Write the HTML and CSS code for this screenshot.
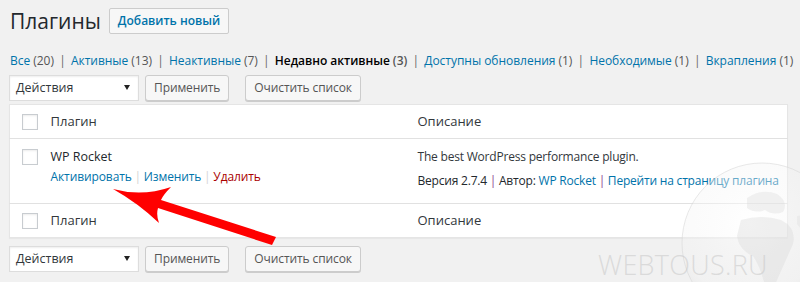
FILE: index.html
```html
<!DOCTYPE html>
<html lang="ru">
<head>
<meta charset="utf-8">
<title>Плагины</title>
<link rel="stylesheet" href="styles.css">
</head>
<body>
<div class="wrap">
  <div class="heading">
    <h1 class="title">Плагины</h1>
    <a class="add-new" href="#">Добавить новый</a>
  </div>

  <ul class="subsubsub">
    <li><a href="#">Все <span class="count">(20)</span></a><span class="sep">|</span></li>
    <li><a href="#">Активные <span class="count">(13)</span></a><span class="sep">|</span></li>
    <li><a href="#">Неактивные <span class="count">(7)</span></a><span class="sep">|</span></li>
    <li><a href="#" class="current">Недавно активные <span class="count">(3)</span></a><span class="sep">|</span></li>
    <li><a href="#">Доступны обновления <span class="count">(1)</span></a><span class="sep">|</span></li>
    <li><a href="#">Необходимые <span class="count">(1)</span></a><span class="sep">|</span></li>
    <li><a href="#">Вкрапления <span class="count">(1)</span></a></li>
  </ul>

  <div class="tablenav top">
    <div class="select">Действия<span class="caret"></span></div>
    <button class="button">Применить</button>
    <button class="button clear">Очистить список</button>
  </div>

  <table class="widefat">
    <colgroup>
      <col class="col-check">
      <col class="col-name">
      <col class="col-desc">
    </colgroup>
    <thead>
      <tr>
        <td class="check-column"><span class="cb"></span></td>
        <th class="head-cell">Плагин</th>
        <th class="head-cell">Описание</th>
      </tr>
    </thead>
    <tbody>
      <tr class="plugin-row">
        <td class="check-column row-check"><span class="cb"></span></td>
        <td class="plugin-title">
          <div class="name">WP Rocket</div>
          <div class="row-actions"><a href="#">Активировать</a><span class="bar">|</span><a href="#">Изменить</a><span class="bar">|</span><a href="#" class="delete">Удалить</a></div>
        </td>
        <td class="plugin-desc">
          <p class="desc-text">The best WordPress performance plugin.</p>
          <div class="meta">Версия 2.7.4<span class="pipe">|</span>Автор: <a href="#">WP Rocket</a><span class="pipe">|</span><a href="#">Перейти на страницу плагина</a></div>
        </td>
      </tr>
    </tbody>
    <tfoot>
      <tr>
        <td class="check-column"><span class="cb"></span></td>
        <th class="head-cell">Плагин</th>
        <th class="head-cell">Описание</th>
      </tr>
    </tfoot>
  </table>

  <div class="tablenav bottom">
    <div class="select">Действия<span class="caret"></span></div>
    <button class="button">Применить</button>
    <button class="button clear">Очистить список</button>
  </div>
</div>

<div class="watermark">
  <svg class="globe" width="170" height="170" viewBox="0 0 170 170">
    <defs>
      <radialGradient id="gl" cx="0.42" cy="0.38" r="0.65">
        <stop offset="0" stop-color="#ffffff" stop-opacity="0.55"/>
        <stop offset="0.7" stop-color="#f2f2f2" stop-opacity="0.35"/>
        <stop offset="1" stop-color="#c8c8c8" stop-opacity="0.4"/>
      </radialGradient>
    </defs>
    <circle cx="85" cy="85" r="80" fill="url(#gl)" stroke="#d6d6d6" stroke-opacity="0.55" stroke-width="1"/>
    <path d="M70,40 Q85,30 100,36 Q112,44 106,54 Q96,58 88,52 Q78,56 70,50 Z" fill="#d4d4d4" fill-opacity="0.3"/>
    <path d="M64,62 Q84,56 104,62 Q120,70 116,86 Q108,104 100,122 Q94,136 88,128 Q84,110 76,98 Q62,92 60,78 Z" fill="#d4d4d4" fill-opacity="0.32"/>
    <path d="M120,58 Q140,56 150,70 Q146,80 136,78 Q126,74 120,66 Z" fill="#d6d6d6" fill-opacity="0.28"/>
  </svg>
  <div class="wm-text">WEBTOUS.RU</div>
</div>

<svg class="arrow" width="800" height="282" viewBox="0 0 800 282">
  <path d="M113,189 Q142,197 171,187 Q163,195 161,200 L276,237 L272,245 L158,208 Q156,215 159,223 Q138,203 113,189 Z" fill="#ff0000"/>
</svg>
</body>
</html>
```

FILE: styles.css
```css
html, body {
  margin: 0;
  padding: 0;
  background: #f1f1f1;
}

body {
  font-family: "Open Sans", "Noto Sans", sans-serif;
  font-size: 12px;
  color: #444;
  position: relative;
  width: 800px;
  height: 282px;
  overflow: hidden;
}

a {
  color: #0073aa;
  text-decoration: none;
}

.wrap {
  margin: 0 13px 0 9px;
  padding-top: 8px;
  position: relative;
  z-index: 1;
}

.heading {
  display: flex;
  align-items: center;
  height: 26px;
}

.title {
  margin: 0;
  font-size: 21px;
  font-weight: 400;
  color: #23282d;
  line-height: 26px;
  padding-left: 1px;
}

.add-new {
  margin-left: 8px;
  height: 24px;
  line-height: 24px;
  padding: 0 8px;
  border: 1px solid #ccc;
  border-radius: 2px;
  background: #f7f7f7;
  font-weight: 600;
  font-size: 12px;
  color: #0073aa;
}

.subsubsub {
  list-style: none;
  margin: 18px 0 0 1px;
  padding: 0;
  display: flex;
  height: 18px;
  line-height: 18px;
  color: #666;
  white-space: nowrap;
  letter-spacing: -0.03px;
}

.subsubsub .count {
  color: #555;
}

.subsubsub .current {
  color: #000;
  font-weight: 600;
}

.sep {
  display: inline-block;
  width: 17px;
  text-align: center;
  color: #666;
}

.tablenav {
  display: flex;
  align-items: flex-start;
  height: 26px;
}

.tablenav.top {
  margin-top: 5px;
}

.tablenav.bottom {
  margin-top: 8px;
}

.select {
  box-sizing: border-box;
  width: 130px;
  height: 26px;
  line-height: 24px;
  padding: 0 8px 0 6px;
  background: #fff;
  border: 1px solid #ddd;
  box-shadow: inset 0 1px 2px rgba(0, 0, 0, 0.07);
  color: #32373c;
  font-size: 12.5px;
  display: flex;
  justify-content: space-between;
  align-items: center;
}

.caret {
  width: 0;
  height: 0;
  border-left: 3px solid transparent;
  border-right: 3px solid transparent;
  border-top: 5px solid #222;
  margin-top: -2px;
}

.button {
  box-sizing: border-box;
  height: 26px;
  margin-left: 6px;
  padding: 0 8px 1px;
  font-family: "Open Sans", "Noto Sans", sans-serif;
  font-size: 12px;
  letter-spacing: -0.1px;
  color: #555;
  background: #f7f7f7;
  border: 1px solid #ccc;
  border-radius: 3px;
  box-shadow: 0 1px 0 #ccc;
}

.button.clear {
  margin-left: 16px;
}

.widefat {
  margin-top: 3px;
  width: 779px;
  border: 1px solid #e5e5e5;
  border-collapse: collapse;
  border-spacing: 0;
  table-layout: fixed;
  background: #fff;
  box-shadow: 0 1px 1px rgba(0, 0, 0, 0.04);
}

.col-check { width: 31px; }
.col-name { width: 367px; }

.widefat td, .widefat th {
  padding: 0;
  vertical-align: top;
  text-align: left;
}

.widefat thead tr {
  border-bottom: 1px solid #e1e1e1;
  height: 34px;
}

.widefat tfoot tr {
  border-top: 1px solid #e1e1e1;
  height: 33px;
}

.head-cell {
  font-size: 13px;
  font-weight: 400;
  color: #32373c;
  line-height: 20px;
  padding: 6px 10px 7px !important;
}

.check-column {
  padding: 9px 0 0 12px !important;
}

.cb {
  display: block;
  box-sizing: border-box;
  width: 16px;
  height: 16px;
  border: 1px solid #c8ccd0;
  background: #fff;
  box-shadow: inset 0 1px 2px rgba(0, 0, 0, 0.08);
}

.row-check {
  padding-top: 10px !important;
}

.plugin-row {
  height: 65px;
}

.plugin-title {
  padding: 8px 10px 0 !important;
}

.name {
  font-size: 12.5px;
  color: #23282d;
  line-height: 20px;
}

.row-actions {
  margin-top: 0;
  line-height: 20px;
  font-size: 12px;
  letter-spacing: -0.1px;
  color: #d4d4d4;
}

.row-actions .bar {
  display: inline-block;
  width: 12px;
  text-align: center;
}

.row-actions .delete {
  color: #a00;
}

.plugin-desc {
  padding: 8px 10px 0 !important;
  color: #32373c;
  letter-spacing: -0.2px;
}

.desc-text {
  margin: 0;
  line-height: 20px;
}

.meta {
  margin-top: 4px;
  line-height: 20px;
  color: #23282d;
  white-space: nowrap;
}

.meta .pipe {
  display: inline-block;
  width: 12px;
  text-align: center;
  color: #8e3b8e;
}

.watermark {
  position: absolute;
  left: 590px;
  top: 150px;
  width: 210px;
  height: 132px;
  overflow: hidden;
  z-index: 2;
  pointer-events: none;
}

.globe {
  position: absolute;
  left: 87px;
  top: 8px;
}

.wm-text {
  position: absolute;
  left: 8px;
  top: 96px;
  font-family: "Open Sans", sans-serif;
  font-size: 27px;
  font-weight: 300;
  letter-spacing: 0.3px;
  color: rgba(195, 195, 195, 0.5);
  white-space: nowrap;
}

.arrow {
  position: absolute;
  left: 0;
  top: 0;
  z-index: 3;
  pointer-events: none;
}
```
